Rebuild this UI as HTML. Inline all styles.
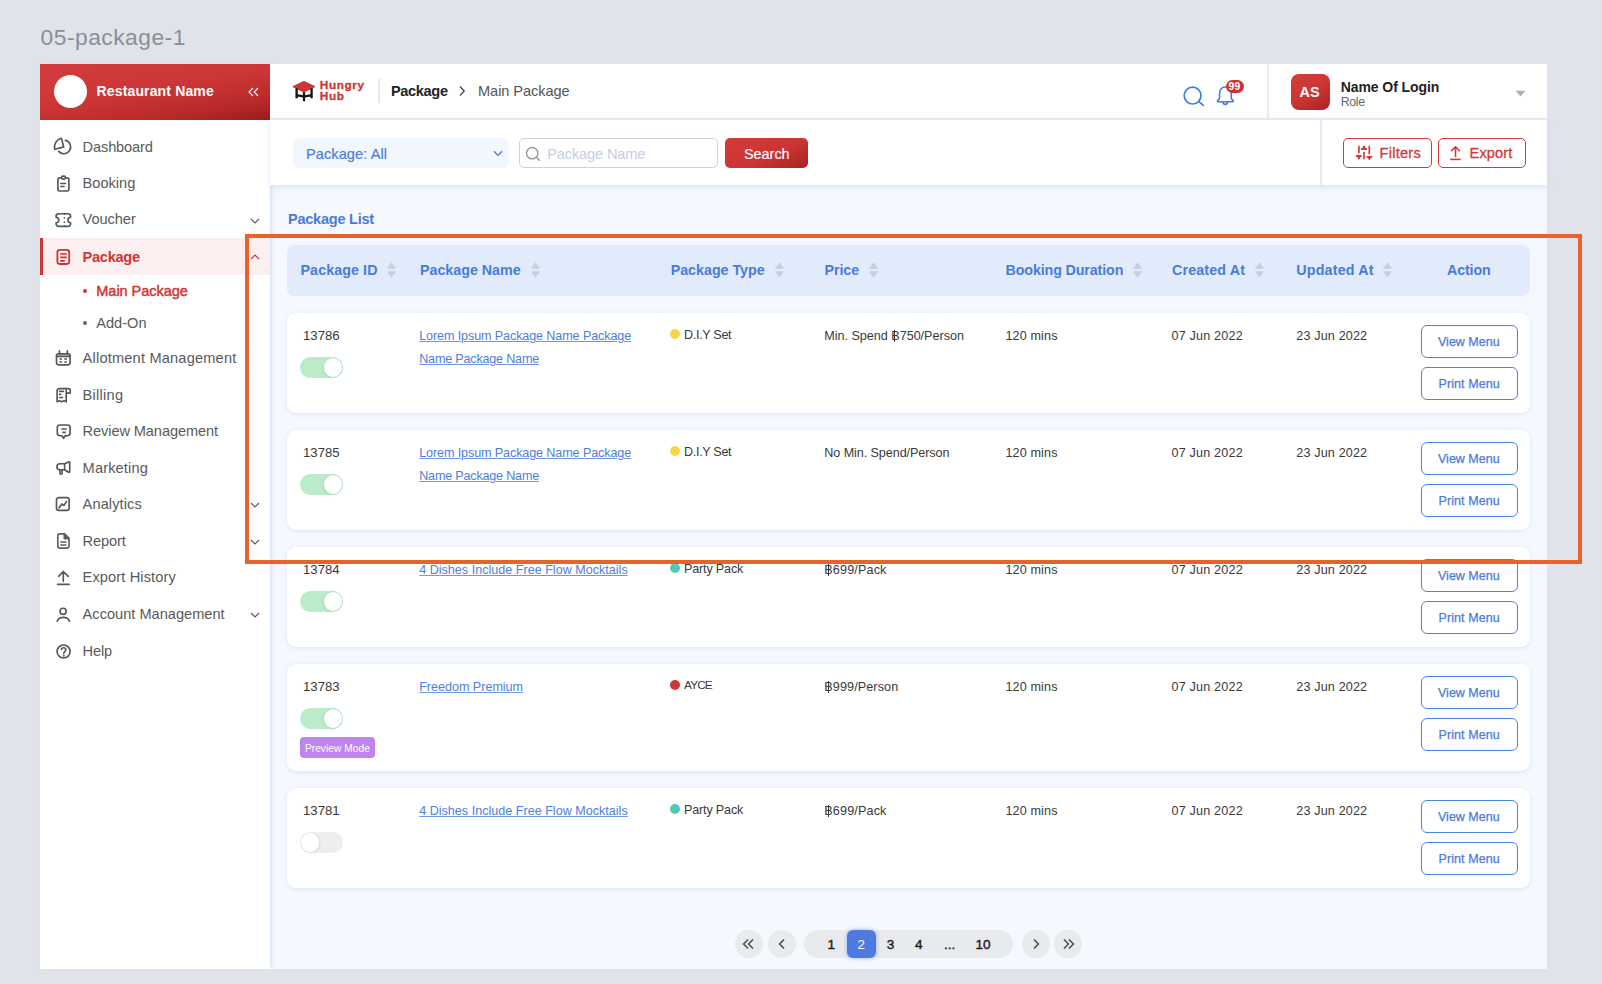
<!DOCTYPE html>
<html><head><meta charset="utf-8">
<style>
*{box-sizing:border-box;margin:0;padding:0}
html,body{width:1602px;height:984px;overflow:hidden;background:#E0E4EA;font-family:"Liberation Sans",sans-serif;position:relative}
.a{position:absolute}
.t{position:absolute;white-space:nowrap;line-height:1}
</style></head><body>
<div class="t" style="left:40.6px;top:25.50px;font-size:22.8px;color:#8B8E95;font-weight:400;letter-spacing:0.489px;">05-package-1</div>
<div class="a" style="left:40px;top:64px;width:1507px;height:905px;background:#F5F8FE"></div>
<div class="a" style="left:40px;top:64px;width:230px;height:905px;background:#fff;box-shadow:3px 0 5px -2px rgba(160,190,240,.5)"></div>
<div class="a" style="left:40px;top:64px;width:230px;height:56px;background:linear-gradient(170deg,#D33C3C 0%,#CD3636 45%,#B82A2A 78%,#991C1C 100%)"></div>
<div class="a" style="left:54px;top:75px;width:33px;height:33px;border-radius:50%;background:#fff"></div>
<div class="t" style="left:96.6px;top:84.35px;font-size:14px;color:#fff;font-weight:700;letter-spacing:0.139px;">Restaurant Name</div>
<svg class="a" style="left:248px;top:87px" width="11" height="10" viewBox="0 0 11 10"><path d="M5 1 L1 5 L5 9 M10 1 L6 5 L10 9" fill="none" stroke="#fff" stroke-width="1.1"/></svg>
<div class="a" style="left:40px;top:238px;width:230px;height:37px;background:#FDEFEF"></div>
<div class="a" style="left:40px;top:238px;width:3px;height:37px;background:#D03535"></div>
<svg class="a" style="left:50px;top:134px" width="26" height="26" viewBox="0 0 26 26" fill="none" stroke="#565656" stroke-width="1.65" stroke-linecap="round" stroke-linejoin="round"><path d="M13.7 12.9 L11.4 4.3 A9 9 0 0 0 4.8 15.3 Z"/><path d="M15.3 6.3 A6.8 6.8 0 1 1 8.7 17.4"/></svg>
<svg class="a" style="left:50px;top:170px" width="26" height="26" viewBox="0 0 26 26" fill="none" stroke="#565656" stroke-width="1.65" stroke-linecap="round" stroke-linejoin="round"><rect x="7.9" y="7.9" width="11" height="13.1" rx="2"/><rect x="11.5" y="6.1" width="3.9" height="3" rx="1.5" fill="#fff"/><path d="M10.9 13.5 H15.5 M10.9 16.5 H14"/></svg>
<svg class="a" style="left:50px;top:207px" width="26" height="26" viewBox="0 0 26 26" fill="none" stroke="#565656" stroke-width="1.65" stroke-linecap="round" stroke-linejoin="round"><path d="M8.6 6.7 H18.1 A2.5 2.5 0 0 1 20.6 9.2 V10.3 A2.7 2.7 0 0 0 20.6 15.7 V16.8 A2.5 2.5 0 0 1 18.1 19.3 H8.6 A2.5 2.5 0 0 1 6.1 16.8 V15.7 A2.7 2.7 0 0 0 6.1 10.3 V9.2 A2.5 2.5 0 0 1 8.6 6.7 Z"/><circle cx="14.4" cy="10.9" r="0.9" fill="#565656" stroke="none"/><circle cx="14.4" cy="15.2" r="0.9" fill="#565656" stroke="none"/><path d="M14.4 6.9 V7.3 M14.4 18.7 V19.1" stroke-width="1.2"/></svg>
<svg class="a" style="left:50px;top:243px" width="26" height="26" viewBox="0 0 26 26" fill="none" stroke="#CE3232" stroke-width="1.8"><rect x="7.4" y="6.8" width="11.8" height="14.2" rx="2.4"/><path d="M10.2 11 H16.8 M10.2 14.4 H16.8 M10.2 17.9 H14.8" stroke-width="1.6"/></svg>
<svg class="a" style="left:50px;top:345px" width="26" height="26" viewBox="0 0 26 26" fill="none" stroke="#565656" stroke-width="1.65" stroke-linecap="round" stroke-linejoin="round"><path d="M6.5 11.4 V11.1 A2.2 2.2 0 0 1 8.7 8.9 H17.9 A2.2 2.2 0 0 1 20.1 11.1 V11.4 Z" fill="#E6E6E6" stroke="none"/><rect x="6.5" y="8.9" width="13.6" height="10.9" rx="2.2"/><path d="M9.4 5.8 V8.6 M17.3 5.8 V8.6 M6.5 11.4 H20.1"/><path d="M9.5 13.9 H12.1 M14.3 13.9 H16.9 M9.5 16.9 H12.1 M14.3 16.9 H16.9" stroke-width="1.5" stroke-linecap="butt"/></svg>
<svg class="a" style="left:50px;top:382px" width="26" height="26" viewBox="0 0 26 26" fill="none" stroke="#565656" stroke-width="1.65" stroke-linecap="round" stroke-linejoin="round"><path d="M16.2 6.6 H9.1 C8 6.6 7.1 7.5 7.1 8.6 V19.8 L9.4 18.8 L11.7 19.8 L13.9 18.8 L16.2 19.8 V6.6 H18.3 C19.4 6.6 20.2 7.4 20.2 8.5 V11.1 H16.4"/><path d="M9.6 9.4 H13.4 M9.6 12.4 H10.8 M9.6 15.5 H12.6"/></svg>
<svg class="a" style="left:50px;top:418px" width="26" height="26" viewBox="0 0 26 26" fill="none" stroke="#565656" stroke-width="1.65" stroke-linecap="round" stroke-linejoin="round"><path d="M9.9 7 H17.5 C18.9 7 20.1 8.2 20.1 9.6 V15.1 C20.1 16.5 18.9 17.7 17.5 17.7 H15.3 L13.6 20.3 L12 17.7 H9.9 C8.5 17.7 7.3 16.5 7.3 15.1 V9.6 C7.3 8.2 8.5 7 9.9 7 Z"/><path d="M11.3 11 H16.7 M12.3 14.4 H15.8" stroke-linecap="butt"/></svg>
<svg class="a" style="left:50px;top:455px" width="26" height="26" viewBox="0 0 26 26" fill="none" stroke="#565656" stroke-width="1.65" stroke-linecap="round" stroke-linejoin="round"><path d="M14.6 8.7 H9.9 C8.2 8.7 6.9 10 6.9 11.7 C6.9 13.4 8.2 14.7 9.9 14.7 H14.6 Z"/><path d="M14.6 8.7 L18.6 6.9 C19.1 6.7 19.7 7 19.7 7.6 V16.6 C19.7 17.2 19.1 17.5 18.6 17.3 L14.6 14.7"/><path d="M9.9 14.9 V17.9 C9.9 18.6 10.3 19.1 11 19.1 C11.7 19.1 12.1 18.6 12.1 17.9 V14.9"/></svg>
<svg class="a" style="left:50px;top:491px" width="26" height="26" viewBox="0 0 26 26" fill="none" stroke="#565656" stroke-width="1.65" stroke-linecap="round" stroke-linejoin="round"><rect x="6.5" y="6.6" width="12.6" height="12.8" rx="2.2"/><path d="M9 16.9 L11.8 13 L14 14.4 L16.5 10.4"/></svg>
<svg class="a" style="left:50px;top:528px" width="26" height="26" viewBox="0 0 26 26" fill="none" stroke="#5D6166" stroke-width="1.65" stroke-linejoin="round"><path d="M9.8 5.8 H14.5 L19 10.3 V18.1 C19 19.2 18.1 20.1 17 20.1 H9.8 C8.7 20.1 7.8 19.2 7.8 18.1 V7.8 C7.8 6.7 8.7 5.8 9.8 5.8 Z"/><path d="M14.3 5.8 V10.6 H19 Z" fill="#5D6166"/><path d="M10.3 13.9 H16.5 M10.3 16.9 H16.5" stroke-width="1.5"/></svg>
<svg class="a" style="left:50px;top:565px" width="26" height="26" viewBox="0 0 26 26" fill="none" stroke="#565656" stroke-width="1.65" stroke-linecap="round" stroke-linejoin="round"><path d="M13.3 16.3 V6.6 M8.6 11.4 L13.3 6.5 L18.2 11.4"/><path d="M7.6 19.4 H19.2"/></svg>
<svg class="a" style="left:50px;top:601px" width="26" height="26" viewBox="0 0 26 26" fill="none" stroke="#565656" stroke-width="1.65" stroke-linecap="round" stroke-linejoin="round"><circle cx="13.1" cy="10.3" r="3.05"/><path d="M7.2 20.2 C8.2 17.6 10.4 16.4 13.3 16.4 C16.2 16.4 18.5 17.6 19.5 20.2"/></svg>
<svg class="a" style="left:50px;top:638px" width="26" height="26" viewBox="0 0 26 26" fill="none" stroke="#565656" stroke-width="1.65" stroke-linecap="round" stroke-linejoin="round"><circle cx="13.6" cy="13.5" r="6.5"/><path d="M11.5 11.4 C11.6 10.3 12.5 9.7 13.6 9.7 C14.8 9.7 15.8 10.5 15.8 11.6 C15.8 13.4 13.8 13.6 13.8 15.6"/><circle cx="13.8" cy="17.8" r="0.95" fill="#565656" stroke="none"/></svg>
<div class="t" style="left:82.6px;top:139.64px;font-size:14.6px;color:#5A5A5A;font-weight:400;letter-spacing:-0.138px;">Dashboard</div>
<div class="t" style="left:82.6px;top:175.54px;font-size:14.6px;color:#5A5A5A;font-weight:400;letter-spacing:-0.008px;">Booking</div>
<div class="t" style="left:82.6px;top:212.24px;font-size:14.6px;color:#5A5A5A;font-weight:400;letter-spacing:-0.060px;">Voucher</div>
<div class="t" style="left:82.6px;top:350.84px;font-size:14.6px;color:#5A5A5A;font-weight:400;letter-spacing:0.191px;">Allotment Management</div>
<div class="t" style="left:82.6px;top:387.54px;font-size:14.6px;color:#5A5A5A;font-weight:400;letter-spacing:0.260px;">Billing</div>
<div class="t" style="left:82.6px;top:423.64px;font-size:14.6px;color:#5A5A5A;font-weight:400;letter-spacing:-0.100px;">Review Management</div>
<div class="t" style="left:82.6px;top:460.74px;font-size:14.6px;color:#5A5A5A;font-weight:400;letter-spacing:0.140px;">Marketing</div>
<div class="t" style="left:82.6px;top:496.94px;font-size:14.6px;color:#5A5A5A;font-weight:400;letter-spacing:0.099px;">Analytics</div>
<div class="t" style="left:82.6px;top:533.94px;font-size:14.6px;color:#5A5A5A;font-weight:400;letter-spacing:-0.103px;">Report</div>
<div class="t" style="left:82.6px;top:570.44px;font-size:14.6px;color:#5A5A5A;font-weight:400;letter-spacing:0.120px;">Export History</div>
<div class="t" style="left:82.6px;top:607.44px;font-size:14.6px;color:#5A5A5A;font-weight:400;letter-spacing:0.002px;">Account Management</div>
<div class="t" style="left:82.6px;top:643.94px;font-size:14.6px;color:#5A5A5A;font-weight:400;letter-spacing:-0.139px;">Help</div>
<div class="t" style="left:82.6px;top:249.54px;font-size:14.6px;color:#D03535;font-weight:700;letter-spacing:-0.289px;">Package</div>
<div class="t" style="left:96.3px;top:283.64px;font-size:14.6px;color:#D03535;font-weight:400;letter-spacing:-0.089px;-webkit-text-stroke:.45px #D03535">Main Package</div>
<div class="t" style="left:96.3px;top:316.14px;font-size:14.6px;color:#5A5A5A;font-weight:400;letter-spacing:-0.019px;">Add-On</div>
<div class="a" style="left:83px;top:289px;width:4px;height:4px;border-radius:50%;background:#D03535"></div>
<div class="a" style="left:83px;top:321px;width:4px;height:4px;border-radius:50%;background:#666"></div>
<svg class="a" style="left:249.5px;top:217.5px" width="10" height="6" viewBox="0 0 10 6"><path d="M1 1 L5 5 L9 1" fill="none" stroke="#5A5A5A" stroke-width="1.1"/></svg>
<svg class="a" style="left:249.5px;top:253.5px" width="10" height="6" viewBox="0 0 10 6"><path d="M1 5 L5 1 L9 5" fill="none" stroke="#D03535" stroke-width="1.1"/></svg>
<svg class="a" style="left:249.5px;top:501.5px" width="10" height="6" viewBox="0 0 10 6"><path d="M1 1 L5 5 L9 1" fill="none" stroke="#5A5A5A" stroke-width="1.1"/></svg>
<svg class="a" style="left:249.5px;top:538.5px" width="10" height="6" viewBox="0 0 10 6"><path d="M1 1 L5 5 L9 1" fill="none" stroke="#5A5A5A" stroke-width="1.1"/></svg>
<svg class="a" style="left:249.5px;top:611.5px" width="10" height="6" viewBox="0 0 10 6"><path d="M1 1 L5 5 L9 1" fill="none" stroke="#5A5A5A" stroke-width="1.1"/></svg>
<div class="a" style="left:270px;top:64px;width:1277px;height:56px;background:#fff;border-bottom:2px solid #E7EAF0"></div>
<div class="a" style="left:1267px;top:64px;width:2px;height:54px;background:#E4ECFA"></div>
<svg class="a" style="left:291px;top:80px" width="26" height="23" viewBox="0 0 26 23"><path d="M2.4 6.6 L12.9 1.8 L23.4 6.6 L12.9 11.8 Z" fill="#D03535" stroke="#D03535" stroke-width="1.5" stroke-linejoin="round"/><path d="M5.6 8.2 V18.2 M20.6 8.2 V18.2 M13 12.2 V21.2 M5.6 15.2 L13 16.6 L20.6 15.2" fill="none" stroke="#111" stroke-width="2.3"/></svg>
<div class="t" style="left:319.8px;top:79.91px;font-size:11.8px;color:#D03535;font-weight:700;letter-spacing:.6px;-webkit-text-stroke:.3px #D03535">Hungry</div>
<div class="t" style="left:319.8px;top:91.11px;font-size:11.8px;color:#D03535;font-weight:700;letter-spacing:.6px;-webkit-text-stroke:.3px #D03535">Hub</div>
<div class="a" style="left:378px;top:79px;width:1.5px;height:24px;background:#E3E7EE"></div>
<div class="t" style="left:391px;top:83.84px;font-size:14.6px;color:#222;font-weight:700;letter-spacing:-0.372px;">Package</div>
<svg class="a" style="left:458px;top:85px" width="8" height="12" viewBox="0 0 8 12"><path d="M2 1.5 L6.2 6 L2 10.5" fill="none" stroke="#444" stroke-width="1.3"/></svg>
<div class="t" style="left:478px;top:83.84px;font-size:14.6px;color:#555;font-weight:400;letter-spacing:-0.071px;">Main Package</div>
<svg class="a" style="left:1180px;top:84px" width="26" height="24" viewBox="0 0 26 24"><circle cx="12.6" cy="11.6" r="8.4" fill="none" stroke="#3D7FE0" stroke-width="1.7"/><path d="M18.8 17.6 L23.4 21.4" stroke="#3D7FE0" stroke-width="1.8" stroke-linecap="round"/></svg>
<svg class="a" style="left:1214px;top:84px" width="24" height="24" viewBox="0 0 24 24"><path d="M11.2 3 C7.8 3 5.6 5.6 5.6 9 V13.6 C5.6 14.8 5 15.6 3.8 16.4 C3.2 16.8 3.4 17.8 4.2 17.8 H18.6 C19.4 17.8 19.6 16.8 19 16.4 C17.8 15.6 17.2 14.8 17.2 13.6 V9 C17.2 5.6 15 3 11.2 3 Z" fill="none" stroke="#3D7FE0" stroke-width="1.6" stroke-linejoin="round"/><path d="M9.2 18 C9.2 19.4 10 20.4 11.3 20.4 C12.6 20.4 13.4 19.4 13.4 18" fill="none" stroke="#3D7FE0" stroke-width="1.6"/></svg>
<div class="a" style="left:1226px;top:80px;width:18px;height:13px;border-radius:6.5px;background:#D0302F"></div>
<div class="t" style="left:1228.6px;top:82.20px;font-size:10.4px;color:#fff;font-weight:700;letter-spacing:0.037px;">99</div>
<div class="a" style="left:1291px;top:74px;width:39px;height:36px;border-radius:8px;background:linear-gradient(150deg,#D63C3C 0%,#CE3535 50%,#A82222 100%)"></div>
<div class="t" style="left:1299.5px;top:85.41px;font-size:14.4px;color:#fff;font-weight:700;">AS</div>
<div class="t" style="left:1340.7px;top:79.95px;font-size:14px;color:#222;font-weight:700;letter-spacing:-0.072px;">Name Of Login</div>
<div class="t" style="left:1340.7px;top:96.30px;font-size:12.4px;color:#686868;font-weight:400;letter-spacing:-0.328px;">Role</div>
<svg class="a" style="left:1515px;top:90px" width="11" height="7" viewBox="0 0 11 7"><path d="M0.5 0.8 H10.5 L5.5 6.4 Z" fill="#AEB2BC"/></svg>
<div class="a" style="left:270px;top:120px;width:1277px;height:65px;background:#fff;box-shadow:0 2px 6px rgba(180,200,235,.45)"></div>
<div class="a" style="left:1320px;top:120px;width:2px;height:65px;background:#E4ECFA"></div>
<div class="a" style="left:293px;top:138px;width:216px;height:30px;border-radius:6px;background:#F2F6FD"></div>
<div class="t" style="left:306px;top:146.84px;font-size:14.6px;color:#4A7BDB;font-weight:400;letter-spacing:0.061px;-webkit-text-stroke:.15px #4A7BDB">Package: All</div>
<svg class="a" style="left:493px;top:150px" width="10" height="7" viewBox="0 0 10 7"><path d="M1 1.2 L5 5.4 L9 1.2" fill="none" stroke="#4A7BDB" stroke-width="1.3"/></svg>
<div class="a" style="left:519px;top:138px;width:199px;height:30px;border-radius:5px;border:1.2px solid #CAD1E4;background:#fff"></div>
<svg class="a" style="left:525px;top:146px" width="16" height="16" viewBox="0 0 16 16"><circle cx="7.2" cy="7.2" r="5.7" fill="none" stroke="#8E939C" stroke-width="1.3"/><path d="M11.3 11.3 L14.4 14.2" stroke="#8E939C" stroke-width="1.3" stroke-linecap="round"/></svg>
<div class="t" style="left:547.2px;top:146.64px;font-size:14.6px;color:#C6CDE0;font-weight:400;letter-spacing:-0.135px;">Package Name</div>
<div class="a" style="left:725px;top:138px;width:83px;height:30px;border-radius:5px;background:linear-gradient(155deg,#D63A3A 0%,#CD3434 55%,#A52323 100%)"></div>
<div class="t" style="left:744px;top:146.61px;font-size:14.4px;color:#fff;font-weight:400;letter-spacing:-0.002px;-webkit-text-stroke:.15px #fff">Search</div>
<div class="a" style="left:1343px;top:138px;width:89px;height:30px;border-radius:5px;border:1.2px solid #D03A3A"></div>
<svg class="a" style="left:1350px;top:140px" width="30" height="26" viewBox="0 0 30 26"><path d="M8.9 6.4 V12.6 M14 12.6 V18.4 M19.3 6.4 V13.4 M6.5 15.9 H11 M11.6 9.1 H16.4 M17.2 16.8 H21.6" stroke="#D03A3A" stroke-width="1.7" stroke-linecap="round"/><path d="M7.4 16.2 L8.9 19 L10.4 16.2 Z M12.5 8.8 L14 6 L15.5 8.8 Z M17.9 17.1 L19.4 19.5 L20.9 17.1 Z" fill="#D03A3A" stroke="#D03A3A" stroke-width="1.1" stroke-linejoin="round"/></svg>
<div class="t" style="left:1379.5px;top:146.24px;font-size:14.6px;color:#D03A3A;font-weight:400;letter-spacing:0.244px;-webkit-text-stroke:.3px #D03A3A">Filters</div>
<div class="a" style="left:1438px;top:138px;width:88px;height:30px;border-radius:5px;border:1.2px solid #D03A3A"></div>
<svg class="a" style="left:1448px;top:144px" width="15" height="17" viewBox="0 0 15 17"><path d="M7.5 13 V3 M3.2 7.2 L7.5 2.8 L11.8 7.2" fill="none" stroke="#D03A3A" stroke-width="1.6" stroke-linejoin="round"/><path d="M2.2 15.4 H12.8" stroke="#D03A3A" stroke-width="1.6"/></svg>
<div class="t" style="left:1469.6px;top:146.24px;font-size:14.6px;color:#D03A3A;font-weight:400;letter-spacing:0.083px;-webkit-text-stroke:.3px #D03A3A">Export</div>
<div class="t" style="left:288px;top:211.84px;font-size:14.6px;color:#4A7BDB;font-weight:700;letter-spacing:-0.285px;">Package List</div>
<div class="a" style="left:287px;top:245px;width:1243px;height:51px;border-radius:8px;background:#E2EBFB"></div>
<div class="t" style="left:300.5px;top:263.20px;font-size:14.3px;color:#4A7BDB;font-weight:700;letter-spacing:0.078px;">Package ID</div>
<svg class="a" style="left:387px;top:262px" width="9" height="16" viewBox="0 0 9 16"><path d="M4.5 1 L8.3 6.2 H0.7 Z M4.5 15 L8.3 9.8 H0.7 Z" fill="#C9CED9" stroke="#C9CED9" stroke-width="1" stroke-linejoin="round"/></svg>
<div class="t" style="left:420px;top:263.20px;font-size:14.3px;color:#4A7BDB;font-weight:700;letter-spacing:-0.031px;">Package Name</div>
<svg class="a" style="left:531px;top:262px" width="9" height="16" viewBox="0 0 9 16"><path d="M4.5 1 L8.3 6.2 H0.7 Z M4.5 15 L8.3 9.8 H0.7 Z" fill="#C9CED9" stroke="#C9CED9" stroke-width="1" stroke-linejoin="round"/></svg>
<div class="t" style="left:670.7px;top:263.20px;font-size:14.3px;color:#4A7BDB;font-weight:700;letter-spacing:-0.028px;">Package Type</div>
<svg class="a" style="left:774.5px;top:262px" width="9" height="16" viewBox="0 0 9 16"><path d="M4.5 1 L8.3 6.2 H0.7 Z M4.5 15 L8.3 9.8 H0.7 Z" fill="#C9CED9" stroke="#C9CED9" stroke-width="1" stroke-linejoin="round"/></svg>
<div class="t" style="left:824.5px;top:263.20px;font-size:14.3px;color:#4A7BDB;font-weight:700;letter-spacing:-0.071px;">Price</div>
<svg class="a" style="left:868.8px;top:262px" width="9" height="16" viewBox="0 0 9 16"><path d="M4.5 1 L8.3 6.2 H0.7 Z M4.5 15 L8.3 9.8 H0.7 Z" fill="#C9CED9" stroke="#C9CED9" stroke-width="1" stroke-linejoin="round"/></svg>
<div class="t" style="left:1005.6px;top:263.20px;font-size:14.3px;color:#4A7BDB;font-weight:700;letter-spacing:-0.143px;">Booking Duration</div>
<svg class="a" style="left:1133px;top:262px" width="9" height="16" viewBox="0 0 9 16"><path d="M4.5 1 L8.3 6.2 H0.7 Z M4.5 15 L8.3 9.8 H0.7 Z" fill="#C9CED9" stroke="#C9CED9" stroke-width="1" stroke-linejoin="round"/></svg>
<div class="t" style="left:1172px;top:263.20px;font-size:14.3px;color:#4A7BDB;font-weight:700;letter-spacing:0.137px;">Created At</div>
<svg class="a" style="left:1254.5px;top:262px" width="9" height="16" viewBox="0 0 9 16"><path d="M4.5 1 L8.3 6.2 H0.7 Z M4.5 15 L8.3 9.8 H0.7 Z" fill="#C9CED9" stroke="#C9CED9" stroke-width="1" stroke-linejoin="round"/></svg>
<div class="t" style="left:1296.3px;top:263.20px;font-size:14.3px;color:#4A7BDB;font-weight:700;letter-spacing:0.176px;">Updated At</div>
<svg class="a" style="left:1383.3px;top:262px" width="9" height="16" viewBox="0 0 9 16"><path d="M4.5 1 L8.3 6.2 H0.7 Z M4.5 15 L8.3 9.8 H0.7 Z" fill="#C9CED9" stroke="#C9CED9" stroke-width="1" stroke-linejoin="round"/></svg>
<div class="t" style="left:1447px;top:263.20px;font-size:14.3px;color:#4A7BDB;font-weight:700;letter-spacing:-0.157px;">Action</div>
<div class="a" style="left:287px;top:313px;width:1243px;height:100px;border-radius:9px;background:#fff;box-shadow:0 1px 4px rgba(165,190,235,.35)"></div>
<div class="t" style="left:303px;top:328.63px;font-size:13.2px;color:#393939;font-weight:400;">13786</div>
<div class="t" style="left:419.2px;top:330.13px;font-size:12.6px;color:#4D7EDD;font-weight:400;letter-spacing:-0.116px;text-decoration:underline;text-underline-offset:.6px;text-decoration-color:#6F97E4">Lorem Ipsum Package Name Package</div>
<div class="t" style="left:419.2px;top:353.13px;font-size:12.6px;color:#4D7EDD;font-weight:400;letter-spacing:-0.200px;text-decoration:underline;text-underline-offset:.6px;text-decoration-color:#6F97E4">Name Package Name</div>
<div class="a" style="left:670px;top:329px;width:10px;height:10px;border-radius:50%;background:#F9D544"></div>
<div class="t" style="left:684px;top:328.53px;font-size:12.6px;color:#393939;font-weight:400;letter-spacing:-0.321px;">D.I.Y Set</div>
<div class="t" style="left:824.3px;top:330.13px;font-size:12.6px;color:#393939;font-weight:400;letter-spacing:-0.021px;">Min. Spend <span style="position:relative;display:inline-block">B<span style="position:absolute;left:38%;top:-.6px;bottom:1.2px;width:1px;background:currentColor"></span></span>750/Person</div>
<div class="t" style="left:1005.4px;top:330.13px;font-size:12.6px;color:#393939;font-weight:400;letter-spacing:0.142px;">120 mins</div>
<div class="t" style="left:1171.5px;top:330.13px;font-size:12.6px;color:#393939;font-weight:400;letter-spacing:0.187px;">07 Jun 2022</div>
<div class="t" style="left:1296.3px;top:330.13px;font-size:12.6px;color:#393939;font-weight:400;letter-spacing:0.147px;">23 Jun 2022</div>
<div class="a" style="left:300px;top:357px;width:43px;height:21px;border-radius:10.5px;background:#BCEBCA"></div>
<div class="a" style="left:323.6px;top:358.2px;width:18.6px;height:18.6px;border-radius:50%;background:#fff;box-shadow:0 0 0 .7px #A6E2BA, -1px 1px 3px rgba(0,0,0,.08)"></div>
<div class="a" style="left:1421px;top:325px;width:97px;height:33.4px;border-radius:6px;border:1.4px solid #4884E8;background:#fff"></div>
<div class="t" style="left:1438px;top:335.62px;font-size:12.5px;color:#4A7BDB;font-weight:400;letter-spacing:-0.001px;-webkit-text-stroke:.25px #4A7BDB">View Menu</div>
<div class="a" style="left:1421px;top:367px;width:97px;height:33.4px;border-radius:6px;border:1.4px solid #4884E8;background:#fff"></div>
<div class="t" style="left:1438.5px;top:377.62px;font-size:12.5px;color:#4A7BDB;font-weight:400;letter-spacing:0.094px;-webkit-text-stroke:.25px #4A7BDB">Print Menu</div>
<div class="a" style="left:287px;top:430px;width:1243px;height:100px;border-radius:9px;background:#fff;box-shadow:0 1px 4px rgba(165,190,235,.35)"></div>
<div class="t" style="left:303px;top:445.63px;font-size:13.2px;color:#393939;font-weight:400;">13785</div>
<div class="t" style="left:419.2px;top:447.13px;font-size:12.6px;color:#4D7EDD;font-weight:400;letter-spacing:-0.116px;text-decoration:underline;text-underline-offset:.6px;text-decoration-color:#6F97E4">Lorem Ipsum Package Name Package</div>
<div class="t" style="left:419.2px;top:470.13px;font-size:12.6px;color:#4D7EDD;font-weight:400;letter-spacing:-0.200px;text-decoration:underline;text-underline-offset:.6px;text-decoration-color:#6F97E4">Name Package Name</div>
<div class="a" style="left:670px;top:446px;width:10px;height:10px;border-radius:50%;background:#F9D544"></div>
<div class="t" style="left:684px;top:445.53px;font-size:12.6px;color:#393939;font-weight:400;letter-spacing:-0.321px;">D.I.Y Set</div>
<div class="t" style="left:824.3px;top:447.13px;font-size:12.6px;color:#393939;font-weight:400;letter-spacing:-0.080px;">No Min. Spend/Person</div>
<div class="t" style="left:1005.4px;top:447.13px;font-size:12.6px;color:#393939;font-weight:400;letter-spacing:0.142px;">120 mins</div>
<div class="t" style="left:1171.5px;top:447.13px;font-size:12.6px;color:#393939;font-weight:400;letter-spacing:0.187px;">07 Jun 2022</div>
<div class="t" style="left:1296.3px;top:447.13px;font-size:12.6px;color:#393939;font-weight:400;letter-spacing:0.147px;">23 Jun 2022</div>
<div class="a" style="left:300px;top:474px;width:43px;height:21px;border-radius:10.5px;background:#BCEBCA"></div>
<div class="a" style="left:323.6px;top:475.2px;width:18.6px;height:18.6px;border-radius:50%;background:#fff;box-shadow:0 0 0 .7px #A6E2BA, -1px 1px 3px rgba(0,0,0,.08)"></div>
<div class="a" style="left:1421px;top:442px;width:97px;height:33.4px;border-radius:6px;border:1.4px solid #4884E8;background:#fff"></div>
<div class="t" style="left:1438px;top:452.62px;font-size:12.5px;color:#4A7BDB;font-weight:400;letter-spacing:-0.001px;-webkit-text-stroke:.25px #4A7BDB">View Menu</div>
<div class="a" style="left:1421px;top:484px;width:97px;height:33.4px;border-radius:6px;border:1.4px solid #4884E8;background:#fff"></div>
<div class="t" style="left:1438.5px;top:494.62px;font-size:12.5px;color:#4A7BDB;font-weight:400;letter-spacing:0.094px;-webkit-text-stroke:.25px #4A7BDB">Print Menu</div>
<div class="a" style="left:287px;top:547px;width:1243px;height:100px;border-radius:9px;background:#fff;box-shadow:0 1px 4px rgba(165,190,235,.35)"></div>
<div class="t" style="left:303px;top:562.63px;font-size:13.2px;color:#393939;font-weight:400;">13784</div>
<div class="t" style="left:419.2px;top:564.13px;font-size:12.6px;color:#4D7EDD;font-weight:400;letter-spacing:-0.002px;text-decoration:underline;text-underline-offset:.6px;text-decoration-color:#6F97E4">4 Dishes Include Free Flow Mocktails</div>
<div class="a" style="left:670px;top:563px;width:10px;height:10px;border-radius:50%;background:#4FCAB9"></div>
<div class="t" style="left:684px;top:562.53px;font-size:12.6px;color:#393939;font-weight:400;letter-spacing:-0.177px;">Party Pack</div>
<div class="t" style="left:824.3px;top:564.13px;font-size:12.6px;color:#393939;font-weight:400;letter-spacing:0.147px;"><span style="position:relative;display:inline-block">B<span style="position:absolute;left:38%;top:-.6px;bottom:1.2px;width:1px;background:currentColor"></span></span>699/Pack</div>
<div class="t" style="left:1005.4px;top:564.13px;font-size:12.6px;color:#393939;font-weight:400;letter-spacing:0.142px;">120 mins</div>
<div class="t" style="left:1171.5px;top:564.13px;font-size:12.6px;color:#393939;font-weight:400;letter-spacing:0.187px;">07 Jun 2022</div>
<div class="t" style="left:1296.3px;top:564.13px;font-size:12.6px;color:#393939;font-weight:400;letter-spacing:0.147px;">23 Jun 2022</div>
<div class="a" style="left:300px;top:591px;width:43px;height:21px;border-radius:10.5px;background:#BCEBCA"></div>
<div class="a" style="left:323.6px;top:592.2px;width:18.6px;height:18.6px;border-radius:50%;background:#fff;box-shadow:0 0 0 .7px #A6E2BA, -1px 1px 3px rgba(0,0,0,.08)"></div>
<div class="a" style="left:1421px;top:559px;width:97px;height:33.4px;border-radius:6px;border:1.4px solid #4884E8;background:#fff"></div>
<div class="t" style="left:1438px;top:569.62px;font-size:12.5px;color:#4A7BDB;font-weight:400;letter-spacing:-0.001px;-webkit-text-stroke:.25px #4A7BDB">View Menu</div>
<div class="a" style="left:1421px;top:601px;width:97px;height:33.4px;border-radius:6px;border:1.4px solid #4884E8;background:#fff"></div>
<div class="t" style="left:1438.5px;top:611.62px;font-size:12.5px;color:#4A7BDB;font-weight:400;letter-spacing:0.094px;-webkit-text-stroke:.25px #4A7BDB">Print Menu</div>
<div class="a" style="left:287px;top:664px;width:1243px;height:107px;border-radius:9px;background:#fff;box-shadow:0 1px 4px rgba(165,190,235,.35)"></div>
<div class="t" style="left:303px;top:679.63px;font-size:13.2px;color:#393939;font-weight:400;">13783</div>
<div class="t" style="left:419.2px;top:681.13px;font-size:12.6px;color:#4D7EDD;font-weight:400;letter-spacing:-0.027px;text-decoration:underline;text-underline-offset:.6px;text-decoration-color:#6F97E4">Freedom Premium</div>
<div class="a" style="left:670px;top:680px;width:10px;height:10px;border-radius:50%;background:#D03535"></div>
<div class="t" style="left:684px;top:680.21px;font-size:11.8px;color:#393939;font-weight:400;letter-spacing:-0.850px;">AYCE</div>
<div class="t" style="left:824.3px;top:681.13px;font-size:12.6px;color:#393939;font-weight:400;letter-spacing:0.107px;"><span style="position:relative;display:inline-block">B<span style="position:absolute;left:38%;top:-.6px;bottom:1.2px;width:1px;background:currentColor"></span></span>999/Person</div>
<div class="t" style="left:1005.4px;top:681.13px;font-size:12.6px;color:#393939;font-weight:400;letter-spacing:0.142px;">120 mins</div>
<div class="t" style="left:1171.5px;top:681.13px;font-size:12.6px;color:#393939;font-weight:400;letter-spacing:0.187px;">07 Jun 2022</div>
<div class="t" style="left:1296.3px;top:681.13px;font-size:12.6px;color:#393939;font-weight:400;letter-spacing:0.147px;">23 Jun 2022</div>
<div class="a" style="left:300px;top:708px;width:43px;height:21px;border-radius:10.5px;background:#BCEBCA"></div>
<div class="a" style="left:323.6px;top:709.2px;width:18.6px;height:18.6px;border-radius:50%;background:#fff;box-shadow:0 0 0 .7px #A6E2BA, -1px 1px 3px rgba(0,0,0,.08)"></div>
<div class="a" style="left:300px;top:737px;width:75px;height:21px;border-radius:4px;background:#C084F0"></div>
<div class="t" style="left:304.9px;top:744.17px;font-size:10.2px;color:#fff;font-weight:400;letter-spacing:0.040px;">Preview Mode</div>
<div class="a" style="left:1421px;top:676px;width:97px;height:33.4px;border-radius:6px;border:1.4px solid #4884E8;background:#fff"></div>
<div class="t" style="left:1438px;top:686.62px;font-size:12.5px;color:#4A7BDB;font-weight:400;letter-spacing:-0.001px;-webkit-text-stroke:.25px #4A7BDB">View Menu</div>
<div class="a" style="left:1421px;top:718px;width:97px;height:33.4px;border-radius:6px;border:1.4px solid #4884E8;background:#fff"></div>
<div class="t" style="left:1438.5px;top:728.62px;font-size:12.5px;color:#4A7BDB;font-weight:400;letter-spacing:0.094px;-webkit-text-stroke:.25px #4A7BDB">Print Menu</div>
<div class="a" style="left:287px;top:788px;width:1243px;height:100px;border-radius:9px;background:#fff;box-shadow:0 1px 4px rgba(165,190,235,.35)"></div>
<div class="t" style="left:303px;top:803.63px;font-size:13.2px;color:#393939;font-weight:400;">13781</div>
<div class="t" style="left:419.2px;top:805.13px;font-size:12.6px;color:#4D7EDD;font-weight:400;letter-spacing:-0.002px;text-decoration:underline;text-underline-offset:.6px;text-decoration-color:#6F97E4">4 Dishes Include Free Flow Mocktails</div>
<div class="a" style="left:670px;top:804px;width:10px;height:10px;border-radius:50%;background:#4FCAB9"></div>
<div class="t" style="left:684px;top:803.53px;font-size:12.6px;color:#393939;font-weight:400;letter-spacing:-0.177px;">Party Pack</div>
<div class="t" style="left:824.3px;top:805.13px;font-size:12.6px;color:#393939;font-weight:400;letter-spacing:0.147px;"><span style="position:relative;display:inline-block">B<span style="position:absolute;left:38%;top:-.6px;bottom:1.2px;width:1px;background:currentColor"></span></span>699/Pack</div>
<div class="t" style="left:1005.4px;top:805.13px;font-size:12.6px;color:#393939;font-weight:400;letter-spacing:0.142px;">120 mins</div>
<div class="t" style="left:1171.5px;top:805.13px;font-size:12.6px;color:#393939;font-weight:400;letter-spacing:0.187px;">07 Jun 2022</div>
<div class="t" style="left:1296.3px;top:805.13px;font-size:12.6px;color:#393939;font-weight:400;letter-spacing:0.147px;">23 Jun 2022</div>
<div class="a" style="left:300px;top:832px;width:43px;height:21px;border-radius:10.5px;background:#EDEEEF"></div>
<div class="a" style="left:300.8px;top:833.2px;width:18.6px;height:18.6px;border-radius:50%;background:#fff;box-shadow:0 0 0 .6px #E2E3E6, 1px 1px 3px rgba(0,0,0,.08)"></div>
<div class="a" style="left:1421px;top:800px;width:97px;height:33.4px;border-radius:6px;border:1.4px solid #4884E8;background:#fff"></div>
<div class="t" style="left:1438px;top:810.62px;font-size:12.5px;color:#4A7BDB;font-weight:400;letter-spacing:-0.001px;-webkit-text-stroke:.25px #4A7BDB">View Menu</div>
<div class="a" style="left:1421px;top:842px;width:97px;height:33.4px;border-radius:6px;border:1.4px solid #4884E8;background:#fff"></div>
<div class="t" style="left:1438.5px;top:852.62px;font-size:12.5px;color:#4A7BDB;font-weight:400;letter-spacing:0.094px;-webkit-text-stroke:.25px #4A7BDB">Print Menu</div>
<div class="a" style="left:735px;top:930px;width:28px;height:28px;border-radius:50%;background:#E9EAEE"></div>
<div class="a" style="left:768px;top:930px;width:28px;height:28px;border-radius:50%;background:#E9EAEE"></div>
<div class="a" style="left:1022px;top:930px;width:28px;height:28px;border-radius:50%;background:#E9EAEE"></div>
<div class="a" style="left:1054px;top:930px;width:28px;height:28px;border-radius:50%;background:#E9EAEE"></div>
<div class="a" style="left:804px;top:930px;width:209px;height:28px;border-radius:14px;background:#E9EAEE"></div>
<div class="a" style="left:847px;top:930px;width:29px;height:28px;border-radius:6px;background:#4F7BE0;box-shadow:0 0 4px rgba(79,123,224,.55)"></div>
<svg class="a" style="left:741px;top:937px" width="16" height="14" viewBox="0 0 16 14"><path d="M7 2.5 L2.6 7 L7 11.5 M12 2.5 L7.6 7 L12 11.5" fill="none" stroke="#444" stroke-width="1.4"/></svg>
<svg class="a" style="left:776px;top:937px" width="12" height="14" viewBox="0 0 12 14"><path d="M8 2.5 L3.6 7 L8 11.5" fill="none" stroke="#444" stroke-width="1.4"/></svg>
<svg class="a" style="left:1030px;top:937px" width="12" height="14" viewBox="0 0 12 14"><path d="M4 2.5 L8.4 7 L4 11.5" fill="none" stroke="#444" stroke-width="1.4"/></svg>
<svg class="a" style="left:1060px;top:937px" width="16" height="14" viewBox="0 0 16 14"><path d="M4 2.5 L8.4 7 L4 11.5 M9 2.5 L13.4 7 L9 11.5" fill="none" stroke="#444" stroke-width="1.4"/></svg>
<div class="t" style="left:827.5px;top:937.89px;font-size:13.6px;color:#1E1E1E;font-weight:400;-webkit-text-stroke:.4px #1E1E1E">1</div>
<div class="t" style="left:857.5px;top:938.06px;font-size:13.4px;color:#fff;font-weight:400;">2</div>
<div class="t" style="left:886.8px;top:937.89px;font-size:13.6px;color:#1E1E1E;font-weight:400;-webkit-text-stroke:.4px #1E1E1E">3</div>
<div class="t" style="left:915px;top:937.89px;font-size:13.6px;color:#1E1E1E;font-weight:400;-webkit-text-stroke:.4px #1E1E1E">4</div>
<div class="t" style="left:944px;top:937.89px;font-size:13.6px;color:#1E1E1E;font-weight:400;-webkit-text-stroke:.4px #1E1E1E">...</div>
<div class="t" style="left:975.5px;top:937.89px;font-size:13.6px;color:#1E1E1E;font-weight:400;-webkit-text-stroke:.4px #1E1E1E">10</div>
<div class="a" style="left:245px;top:234px;width:1337px;height:330px;border:4px solid #E9622B"></div>
</body></html>
